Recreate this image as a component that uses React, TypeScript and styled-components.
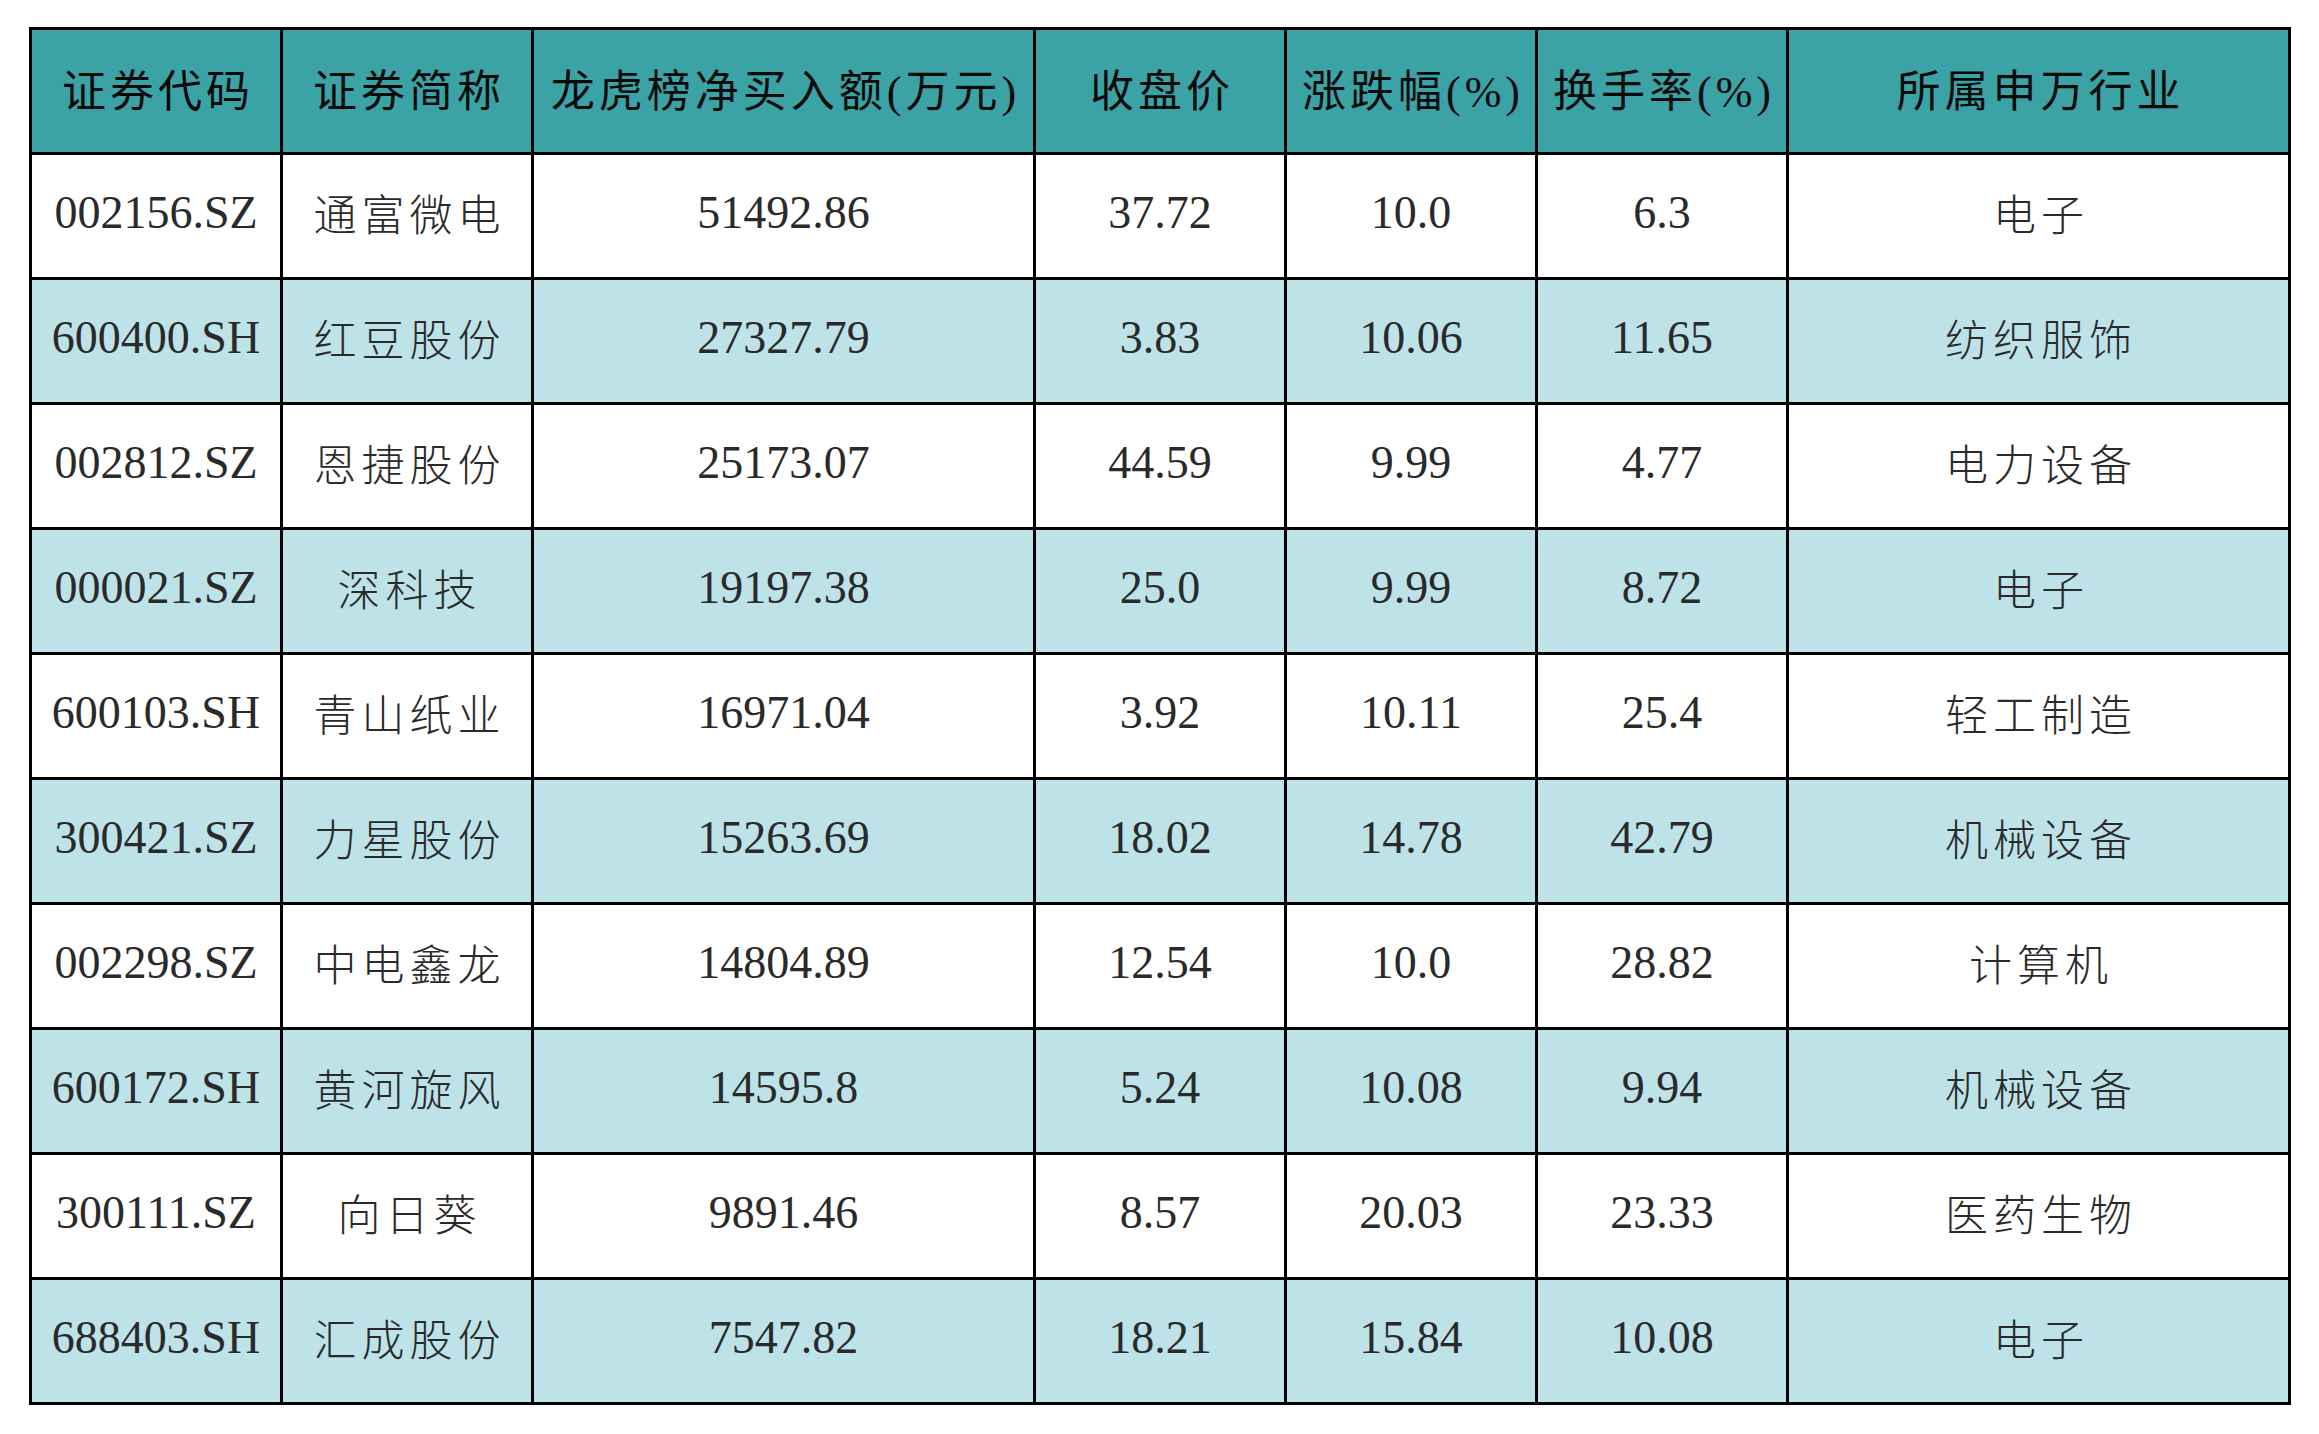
import React from "react";
import styled, { createGlobalStyle } from "styled-components";

const GlobalStyle = createGlobalStyle`
  html, body {
    margin: 0;
    padding: 0;
    background: #ffffff;
  }
  body {
    font-family: "Liberation Serif", "Noto Sans CJK SC", serif;
  }
`;

const Page = styled.div`
  padding: 27px 0 0 29px;
`;

const Grid = styled.div`
  display: grid;
  grid-template-columns: 251px 251px 502px 251px 251px 251px 502px;
  grid-auto-rows: 125px;
  width: max-content;
  border-top: 3px solid #000;
  border-left: 3px solid #000;
`;

const HeadCell = styled.div`
  display: flex;
  align-items: center;
  justify-content: center;
  background: #3ba3a6;
  border-right: 3px solid #000;
  border-bottom: 3px solid #000;
  font-family: "Liberation Serif", "Noto Sans CJK SC", serif;
  font-size: 44px;
  font-weight: 400;
  letter-spacing: 4px;
  padding-left: 4px;
  color: #0a0a0a;
  white-space: nowrap;
  padding-bottom: 6px;
`;

const Cell = styled.div<{ $striped: boolean; $text?: boolean }>`
  display: flex;
  align-items: center;
  justify-content: center;
  background: ${(p) => (p.$striped ? "#bde3e9" : "#ffffff")};
  border-right: 3px solid #000;
  border-bottom: 3px solid #000;
  font-family: "Liberation Serif", "Noto Sans CJK SC", serif;
  color: #2a2a2a;
  white-space: nowrap;
  font-size: ${(p) => (p.$text ? "43px" : "46px")};
  font-weight: ${(p) => (p.$text ? 300 : 400)};
  letter-spacing: ${(p) => (p.$text ? "5px" : "0")};
  padding-left: ${(p) => (p.$text ? "5px" : "0")};
  padding-bottom: 8px;
`;

const headers = [
  "证券代码",
  "证券简称",
  "龙虎榜净买入额(万元)",
  "收盘价",
  "涨跌幅(%)",
  "换手率(%)",
  "所属申万行业",
];

type Row = [string, string, string, string, string, string, string];

const rows: Row[] = [
  ["002156.SZ", "通富微电", "51492.86", "37.72", "10.0", "6.3", "电子"],
  ["600400.SH", "红豆股份", "27327.79", "3.83", "10.06", "11.65", "纺织服饰"],
  ["002812.SZ", "恩捷股份", "25173.07", "44.59", "9.99", "4.77", "电力设备"],
  ["000021.SZ", "深科技", "19197.38", "25.0", "9.99", "8.72", "电子"],
  ["600103.SH", "青山纸业", "16971.04", "3.92", "10.11", "25.4", "轻工制造"],
  ["300421.SZ", "力星股份", "15263.69", "18.02", "14.78", "42.79", "机械设备"],
  ["002298.SZ", "中电鑫龙", "14804.89", "12.54", "10.0", "28.82", "计算机"],
  ["600172.SH", "黄河旋风", "14595.8", "5.24", "10.08", "9.94", "机械设备"],
  ["300111.SZ", "向日葵", "9891.46", "8.57", "20.03", "23.33", "医药生物"],
  ["688403.SH", "汇成股份", "7547.82", "18.21", "15.84", "10.08", "电子"],
];

const textColumns = new Set([1, 6]);

export default function App() {
  return (
    <>
      <GlobalStyle />
      <Page>
        <Grid>
          {headers.map((h) => (
            <HeadCell key={h}>{h}</HeadCell>
          ))}
          {rows.map((row, ri) =>
            row.map((value, ci) => (
              <Cell
                key={`${ri}-${ci}`}
                $striped={ri % 2 === 1}
                $text={textColumns.has(ci)}
              >
                {value}
              </Cell>
            ))
          )}
        </Grid>
      </Page>
    </>
  );
}
